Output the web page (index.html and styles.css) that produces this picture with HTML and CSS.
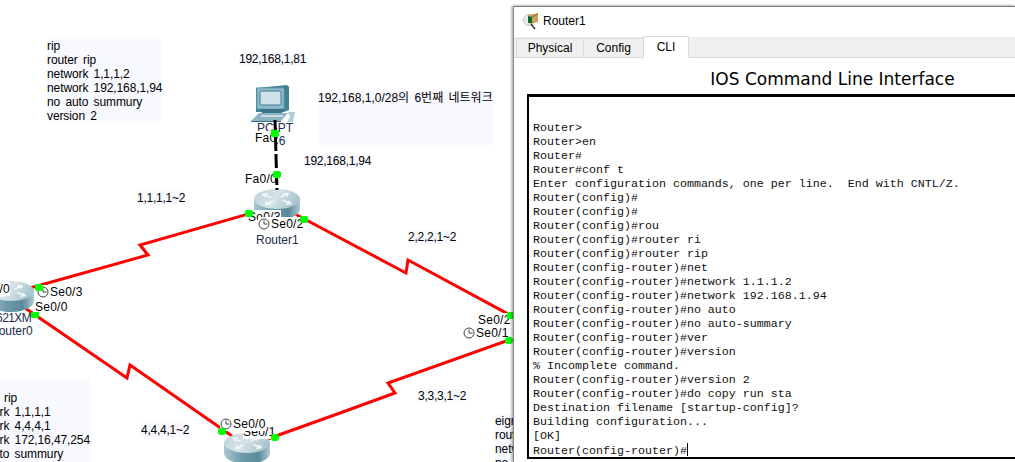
FILE: index.html
```html
<!DOCTYPE html>
<html lang="ko">
<head>
<meta charset="utf-8">
<title>Router1</title>
<link rel="stylesheet" href="styles.css">
</head>
<body>
<main class="workspace">
  <svg class="diagram" width="1015" height="462" viewBox="0 0 1015 462">
    <defs>
      <linearGradient id="routerTop" x1="0" y1="0" x2="1" y2="0.3">
        <stop offset="0" stop-color="#bfd3da"/>
        <stop offset="0.55" stop-color="#d5e3e8"/>
        <stop offset="1" stop-color="#a9c6cf"/>
      </linearGradient>
      <linearGradient id="routerSide" x1="0" y1="0" x2="1" y2="0">
        <stop offset="0" stop-color="#a9c8d2"/>
        <stop offset="0.4" stop-color="#6b99a8"/>
        <stop offset="0.75" stop-color="#5a8a9a"/>
        <stop offset="1" stop-color="#afcbd3"/>
      </linearGradient>
      <symbol id="router" viewBox="0 0 46 31">
        <path d="M0 10V20C0 26 10 31 23 31S46 26 46 20V10Z" fill="url(#routerSide)"/>
        <ellipse cx="23" cy="10" rx="23" ry="10" fill="url(#routerTop)"/>
        <path d="M9 5.500l8 3M14 4.500l-5 1 2.500 2.500M37 14.500l-8-3M32 15.500l5-1-2.500-2.500M34 4.500l-7 3.500M29 5l5-.5-1 3M12 15.500l7-3.500M17 15l-5 .5 1-3" fill="none" stroke="#f2f7f9" stroke-width="1.500"/>
      </symbol>
    </defs>

    <g fill="none" stroke="#ff0000" stroke-width="3">
      <polyline points="30,288 148,255 140,245 262,210"/>
      <polyline points="295,214 406,273 408,260 512,316"/>
      <polyline points="262,441 340,413 395,393 388,383 512,339"/>
      <polyline points="25,308 127,378 130,365 232,436"/>
    </g>

    <use href="#router" x="254" y="189" width="46" height="31"/>
    <use href="#router" x="-12" y="281" width="46" height="31"/>
    <use href="#router" x="224" y="433" width="46" height="31"/>

    <g>
      <path d="M256 88L287 85L289 87V110L284 112H256Z" fill="#3f7f94"/>
      <rect x="257" y="88" width="27" height="21" fill="#8fbccb" stroke="#5f9aac"/>
      <rect x="260" y="91" width="21" height="14" rx="1" fill="#cfe2e9" stroke="#3f7a8c"/>
      <path d="M260 109H284L282 113H262Z" fill="#3c7386"/>
      <path d="M259 113H288L281 121H251Z" fill="#8db4c2"/>
      <path d="M262 115H284L282 117H260Z" fill="#c9dde4"/>
      <path d="M251 121H281V122H251Z" fill="#3f6d7c"/>
      <path d="M288 112L295 112L293 122H287L290 117Z" fill="#b3ced7"/>
    </g>
  </svg>

  <div class="note note-rip-top">
    <p>rip</p><p>router rip</p><p>network 1,1,1,2</p><p>network 192,168,1,94</p><p>no auto summury</p><p>version 2</p>
  </div>
  <div class="note note-rip-bottom">
    <p>rip</p><p>router rip</p><p>network 1,1,1,1</p><p>network 4,4,4,1</p><p>network 172,16,47,254</p><p>no auto summury</p>
  </div>
  <div class="note note-eigrp">
    <p>eigrp</p><p>router</p><p>network</p><p>no</p>
  </div>
  <div class="note note-subnet"><p>192,168,1,0/28의 6번째 네트워크</p></div>

  <span class="label shaded ip-pc">192,168,1,81</span>
  <span class="label shaded ip-router">192,168,1,94</span>
  <span class="label shaded net-1">1,1,1,1~2</span>
  <span class="label shaded net-2">2,2,2,1~2</span>
  <span class="label shaded net-3">3,3,3,1~2</span>
  <span class="label shaded net-4">4,4,4,1~2</span>

  <span class="device dev-pc">PC-PT</span>
  <span class="device dev-pc6">PC6</span>
  <span class="device dev-router1">Router1</span>
  <span class="device dev-model0">2621XM</span>
  <span class="device dev-router0">Router0</span>

  <span class="label port p-pc">Fa0</span>
  <span class="label port p-fa">Fa0/0</span>
  <span class="label port p-r1-se3">Se0/3</span>
  <span class="label port p-r1-se2"><svg class="clock" viewBox="0 0 12 12"><circle cx="6" cy="6" r="5"/><path d="M6 2.500V6H9.500"/></svg>Se0/2</span>
  <span class="label port p-r0-fa">Fa0/0</span>
  <span class="label port p-r0-se3"><svg class="clock" viewBox="0 0 12 12"><circle cx="6" cy="6" r="5"/><path d="M6 2.500V6H9.500"/></svg>Se0/3</span>
  <span class="label port p-r0-se0">Se0/0</span>
  <span class="label port p-r2-se1">Se0/1</span>
  <span class="label port p-r2-se0"><svg class="clock" viewBox="0 0 12 12"><circle cx="6" cy="6" r="5"/><path d="M6 2.500V6H9.500"/></svg>Se0/0</span>
  <span class="label port p-r3-se2">Se0/2</span>
  <span class="label port p-r3-se1"><svg class="clock" viewBox="0 0 12 12"><circle cx="6" cy="6" r="5"/><path d="M6 2.500V6H9.500"/></svg>Se0/1</span>

  <svg class="diagram" width="1015" height="462" viewBox="0 0 1015 462">
    <line class="ethernet" x1="275" y1="120" x2="277" y2="190"/>
    <g fill="#00ff00">
      <rect x="245" y="210" width="8" height="7" rx="2"/>
      <rect x="300" y="216" width="8" height="7" rx="2"/>
      <rect x="273" y="171" width="8" height="7" rx="2"/>
      <rect x="271" y="130" width="8" height="7" rx="2"/>
      <rect x="35" y="284" width="8" height="7" rx="2"/>
      <rect x="31" y="312" width="8" height="6" rx="1"/>
      <rect x="507" y="312" width="7" height="7" rx="1"/>
      <rect x="505" y="337" width="8" height="7" rx="3"/>
      <rect x="218" y="428" width="8" height="7" rx="3"/>
      <rect x="271" y="434" width="8" height="7" rx="3"/>
    </g>
  </svg>

  <section class="window">
    <header class="titlebar">
      <svg class="window-icon" width="18" height="18" viewBox="0 0 18 18">
        <circle cx="7" cy="8" r="5.500" fill="#e8eef0" stroke="#b9c4c8"/>
        <path d="M6 3L16 1V10L8 12Z" fill="#c9a35c"/>
        <path d="M6 4L10 5V11L6 11Z" fill="#0f6b2c"/>
        <path d="M10 5L16 2" stroke="#8a6a2c"/>
        <path d="M9 12L13 17" stroke="#333" stroke-width="1.500"/>
      </svg>
      <span>Router1</span>
    </header>
    <nav class="tabs">
      <span class="tab">Physical</span>
      <span class="tab">Config</span>
      <span class="tab active">CLI</span>
    </nav>
    <h1 class="heading">IOS Command Line Interface</h1>
    <pre class="terminal">

Router&gt;
Router&gt;en
Router#
Router#conf t
Enter configuration commands, one per line.  End with CNTL/Z.
Router(config)#
Router(config)#
Router(config)#rou
Router(config)#router ri
Router(config)#router rip
Router(config-router)#net
Router(config-router)#network 1.1.1.2
Router(config-router)#network 192.168.1.94
Router(config-router)#no auto
Router(config-router)#no auto-summary
Router(config-router)#ver
Router(config-router)#version
% Incomplete command.
Router(config-router)#version 2
Router(config-router)#do copy run sta
Destination filename [startup-config]?
Building configuration...
[OK]
Router(config-router)#<span class="caret"></span></pre>
  </section>
</main>
</body>
</html>
```

FILE: styles.css
```css
html, body {
  margin: 0;
  padding: 0;
  background: #fff;
}

.workspace {
  position: relative;
  width: 1015px;
  height: 462px;
  overflow: hidden;
  background: #fff;
  font-family: "Liberation Sans", "Noto Sans CJK KR", sans-serif;
  color: #000;
}

.diagram {
  position: absolute;
  left: 0;
  top: 0;
}

.ethernet {
  stroke: #000;
  stroke-width: 3;
  stroke-dasharray: 14 3;
}

/* notes on the canvas */
.note {
  position: absolute;
  background: #f8f9ff;
  font-size: 12px;
  line-height: 14px;
  letter-spacing: -0.1px;
  word-spacing: 2px;
  white-space: nowrap;
}
.note p { margin: 0; }

.note-rip-top    { left: 47px;  top: 39px;  width: 114px; height: 82px; }
.note-rip-bottom { left: -32px; top: 379px; width: 122px; height: 83px; }
.note-rip-bottom p:first-child { margin-top: -2px; }
.note-eigrp      { left: 495px; top: 414px; width: 60px;  height: 48px; }
.note-subnet     { left: 318px; top: 91px;  width: 175px; height: 54px; letter-spacing: 0; }

.label {
  position: absolute;
  font-size: 12px;
  line-height: 14px;
  letter-spacing: -0.25px;
  white-space: nowrap;
  display: flex;
  align-items: center;
}
.shaded { background: #f8f9ff; }
.port {
  background: #fff;
  letter-spacing: 0.25px;
}

.ip-pc     { left: 239px; top: 52px; }
.ip-router { left: 304px; top: 154px; }
.net-1     { left: 137px; top: 191px; }
.net-2     { left: 408px; top: 230px; }
.net-3     { left: 418px; top: 389px; }
.net-4     { left: 141px; top: 423px; }

.device {
  position: absolute;
  font-size: 12px;
  line-height: 14px;
  color: #1b2b4b;
  white-space: nowrap;
}
.dev-pc      { left: 257px; top: 121px; }
.dev-pc6     { left: 262px; top: 134px; }
.dev-router1 { left: 256px; top: 233px; }
.dev-model0  { left: -10px; top: 311px; letter-spacing: -0.6px; }
.dev-router0 { left: -10px; top: 324px; }

.clock {
  width: 12px;
  height: 12px;
  margin-right: 1px;
  flex: none;
  fill: #fff;
  stroke: #444;
  stroke-width: 1;
}

.p-pc     { left: 255px; top: 131px; }
.p-fa     { left: 245px; top: 172px; }
.p-r1-se3 { left: 248px; top: 210px; }
.p-r1-se2 { left: 258px; top: 217px; }
.p-r0-fa  { left: -22px; top: 282px; }
.p-r0-se3 { left: 37px;  top: 285px; }
.p-r0-se0 { left: 35px;  top: 300px; }
.p-r2-se1 { left: 243px; top: 425px; }
.p-r2-se0 { left: 220px; top: 417px; }
.p-r3-se2 { left: 478px; top: 313px; }
.p-r3-se1 { left: 463px; top: 326px; }

/* device window */
.window {
  position: absolute;
  left: 513px;
  top: 6px;
  width: 502px;
  height: 456px;
  box-sizing: border-box;
  border-top: 1px solid #7a7a7a;
  border-left: 1px solid #8a8a8a;
  box-shadow: -2px 0 2px rgba(0, 0, 0, 0.22), 0 -1px 2px rgba(0, 0, 0, 0.2);
  background: #fff;
  display: flex;
  flex-direction: column;
}

.titlebar {
  height: 30px;
  box-sizing: border-box;
  padding: 0 0 2px 8px;
  display: flex;
  align-items: center;
  gap: 3px;
  font-family: "Liberation Sans", sans-serif;
  font-size: 12px;
  color: #000;
  flex: none;
}

.tabs {
  height: 20px;
  flex: none;
  display: flex;
  align-items: flex-end;
  padding-left: 2px;
  background: #f0f0f0;
  border-bottom: 1px solid #d9d9d9;
  font-family: "Liberation Sans", sans-serif;
  font-size: 12px;
}

.tab {
  height: 19px;
  line-height: 19px;
  box-sizing: border-box;
  text-align: center;
  background: #f0f0f0;
  border: 1px solid #d9d9d9;
  border-bottom: 0;
  border-right: 0;
  width: 67px;
}
.tab:nth-child(2) { width: 60px; }
.tab.active {
  width: 46px;
  height: 22px;
  margin-bottom: -1px;
  line-height: 20px;
  background: #fff;
  border-right: 1px solid #d9d9d9;
}

.heading {
  margin: 0;
  height: 36px;
  flex: none;
  box-sizing: border-box;
  padding-top: 10px;
  text-align: center;
  font-family: "DejaVu Sans", sans-serif;
  font-weight: 400;
  font-size: 17px;
  line-height: 22px;
  padding-left: 136px;
  color: #000;
}

.terminal {
  margin: 0 0 3px 13px;
  flex: 1;
  box-sizing: border-box;
  border: 2px solid #000;
  border-top-width: 3px;
  border-right: 0;
  padding: 10px 0 0 4px;
  font-family: "Liberation Mono", monospace;
  font-size: 11.67px;
  line-height: 14px;
  color: #111;
  overflow: hidden;
}

.caret {
  display: inline-block;
  width: 1px;
  height: 13px;
  background: #000;
  vertical-align: -2px;
}
```
